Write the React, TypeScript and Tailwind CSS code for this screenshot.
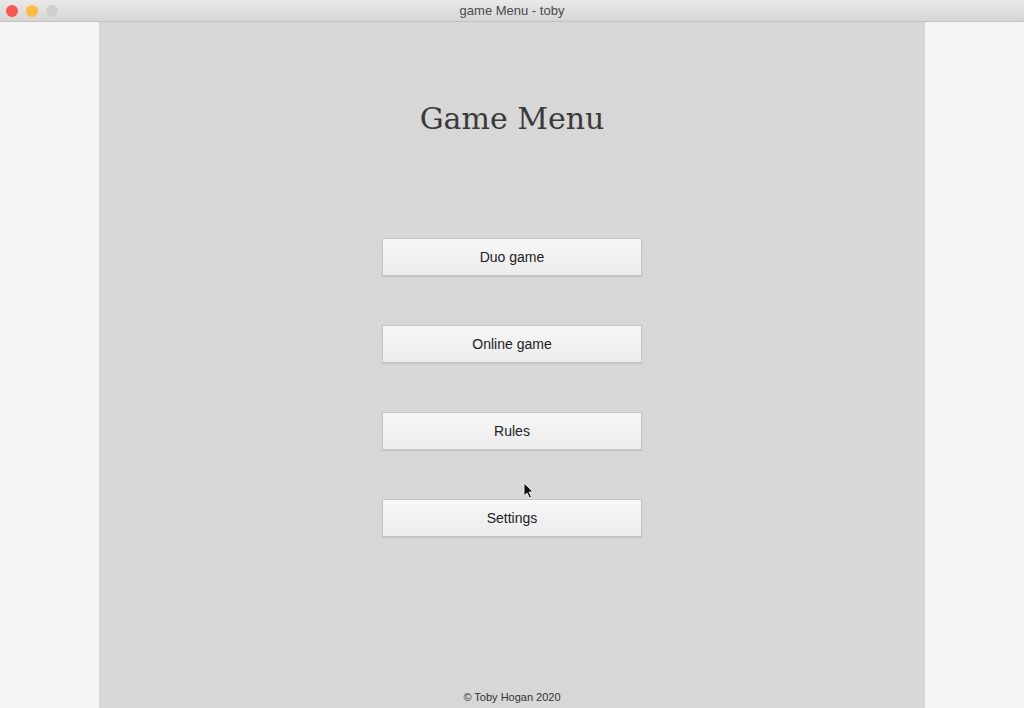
import React from "react";

function Btn({ label }: { label: string }) {
  return (
    <button className="w-[260px] h-[38px] border border-[#c4c4c4] bg-gradient-to-b from-[#f7f7f7] to-[#ececec] text-[14px] text-[#222] shadow-[0_1px_1px_rgba(0,0,0,0.08)] font-['Liberation_Sans',sans-serif]">
      {label}
    </button>
  );
}

export default function App() {
  return (
    <div className="w-[1024px] h-[708px] overflow-hidden flex flex-col bg-[#f5f5f5] relative">
      <div className="h-[22px] shrink-0 bg-gradient-to-b from-[#e9e9e9] to-[#d6d6d6] border-b border-[#c2c2c2] flex items-center relative">
        <div className="flex gap-[8px] pl-[6px]">
          <span className="w-[12px] h-[12px] rounded-full bg-[#fc5753]" />
          <span className="w-[12px] h-[12px] rounded-full bg-[#fdbc40]" />
          <span className="w-[12px] h-[12px] rounded-full bg-[#cfcfcf]" />
        </div>
        <div className="absolute inset-0 flex items-center justify-center text-[13px] text-[#4a4a4a] font-['Liberation_Sans',sans-serif]">
          game Menu - toby
        </div>
      </div>
      <div className="flex-1 flex justify-center">
        <div className="w-[826px] bg-[#d7d7d7] flex flex-col items-center">
          <h1 className="mt-[78px] text-[30px] text-[#3a3a3a] font-['DejaVu_Serif',serif] leading-[38px]">
            Game Menu
          </h1>
          <div className="mt-[100px] flex flex-col gap-[49px] items-center">
            <Btn label="Duo game" />
            <Btn label="Online game" />
            <Btn label="Rules" />
            <Btn label="Settings" />
          </div>
          <div className="mt-auto mb-[3px] text-[11px] text-[#333] font-['Liberation_Sans',sans-serif]">
            © Toby Hogan 2020
          </div>
        </div>
      </div>
      <svg className="absolute left-[523px] top-[482px]" width="12" height="18" viewBox="0 0 12 18">
        <path d="M1 1 L1 14 L4 11 L6.5 16 L8.5 15 L6 10 L10 10 Z" fill="#111" stroke="#fff" strokeWidth="0.8" />
      </svg>
    </div>
  );
}
